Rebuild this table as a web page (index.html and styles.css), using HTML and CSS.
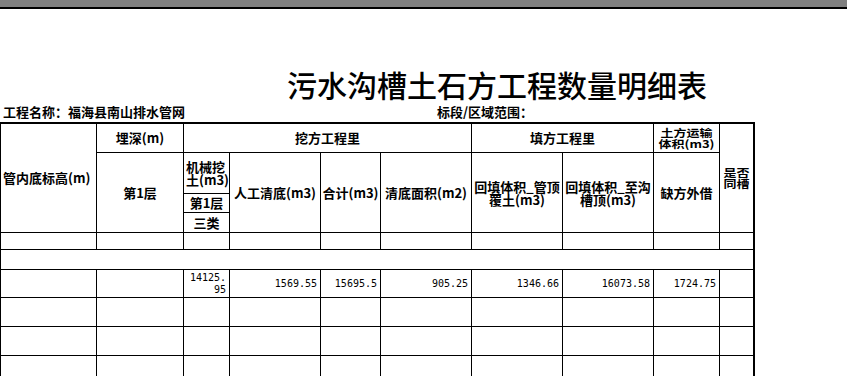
FILE: index.html
```html
<!DOCTYPE html>
<html lang="zh-CN">
<head>
<meta charset="utf-8">
<title>污水沟槽土石方工程数量明细表</title>
<link rel="stylesheet" href="styles.css">
</head>
<body>
<div class="topbar"></div>
<div class="sheet">
  <h1 class="title">污水沟槽土石方工程数量明细表</h1>
  <div class="info">
    <span class="proj">工程名称：福海县南山排水管网</span>
    <span class="section">标段/区域范围：</span>
  </div>
  <div class="grid">
    <div class="c h left r4">管内底标高(m)</div>
    <div class="c h">埋深(m)</div>
    <div class="c h s4">挖方工程里</div>
    <div class="c h s2">填方工程里</div>
    <div class="c h"><span class="squish">土方运输<br>体积(m3)</span></div>
    <div class="c h r4"><span class="squish">是否<br>同槽</span></div>

    <div class="c h r3">第1层</div>
    <div class="c h left wrap">机械挖<br>土(m3)</div>
    <div class="c h r3">人工清底(m3)</div>
    <div class="c h r3">合计(m3)</div>
    <div class="c h r3">清底面积(m2)</div>
    <div class="c h r3 wrap">回填体积_管顶<br>覆土(m3)</div>
    <div class="c h r3 wrap">回填体积_至沟<br>槽顶(m3)</div>
    <div class="c h r3">缺方外借</div>

    <div class="c h">第1层</div>
    <div class="c h">三类</div>

    <div class="c"></div><div class="c"></div><div class="c"></div><div class="c"></div><div class="c"></div>
    <div class="c"></div><div class="c"></div><div class="c"></div><div class="c"></div><div class="c"></div>

    <div class="c s10"></div>

    <div class="c"></div>
    <div class="c"></div>
    <div class="c num">14125.<br>95</div>
    <div class="c num">1569.55</div>
    <div class="c num">15695.5</div>
    <div class="c num">905.25</div>
    <div class="c num">1346.66</div>
    <div class="c num">16073.58</div>
    <div class="c num">1724.75</div>
    <div class="c"></div>

    <div class="c"></div><div class="c"></div><div class="c"></div><div class="c"></div><div class="c"></div>
    <div class="c"></div><div class="c"></div><div class="c"></div><div class="c"></div><div class="c"></div>

    <div class="c"></div><div class="c"></div><div class="c"></div><div class="c"></div><div class="c"></div>
    <div class="c"></div><div class="c"></div><div class="c"></div><div class="c"></div><div class="c"></div>

    <div class="c"></div><div class="c"></div><div class="c"></div><div class="c"></div><div class="c"></div>
    <div class="c"></div><div class="c"></div><div class="c"></div><div class="c"></div><div class="c"></div>
  </div>
</div>
</body>
</html>
```

FILE: styles.css
```css
html, body {
  margin: 0;
  padding: 0;
  background: #fff;
  overflow: hidden;
}
body {
  width: 847px;
  height: 376px;
  font-family: "Noto Sans CJK SC", "Noto Sans", sans-serif;
  color: #000;
}
.topbar {
  height: 7px;
  background: #808080;
  border-bottom: 2px solid #000;
}
.title {
  margin: 60px 0 0 0;
  padding-left: 287px;
  font-size: 30px;
  line-height: 30px;
  height: 30px;
  font-weight: 500;
  white-space: nowrap;
}
.info {
  margin-top: 5px;
  height: 16px;
  display: grid;
  grid-template-columns: 434px 1fr;
  padding-left: 3px;
  font-size: 13px;
  line-height: 16px;
  font-weight: 700;
  white-space: nowrap;
}
.grid {
  margin-top: 2px;
  display: grid;
  width: max-content;
  background: #000;
  gap: 1px;
  border-top: 2px solid #000;
  border-left: 1px solid #000;
  border-right: 2px solid #000;
  grid-template-columns: 95px 86px 45px 90px 59px 90px 90px 90px 65px 33px;
  grid-template-rows: 28px 40px 18px 19px 16px 19px 27px 28px 28px 28px;
}
.c {
  background: #fff;
  display: flex;
  align-items: center;
  justify-content: center;
  text-align: center;
  overflow: hidden;
  white-space: nowrap;
}
.h {
  font-size: 13px;
  line-height: 14px;
  font-weight: 700;
}
.wrap {
  line-height: 13px;
}
.left {
  justify-content: flex-start;
  text-align: left;
  padding-left: 2px;
}
.r3 { grid-row: span 3; }
.r4 { grid-row: span 4; }
.s2 { grid-column: span 2; }
.s4 { grid-column: span 4; }
.s10 { grid-column: span 10; }
.squish {
  display: inline-block;
  line-height: 13px;
  transform: scaleY(0.82);
}
.num {
  font-family: "DejaVu Sans Mono", "Liberation Mono", monospace;
  font-size: 10px;
  line-height: 12px;
  justify-content: flex-end;
  text-align: right;
  padding-right: 3px;
}
```
